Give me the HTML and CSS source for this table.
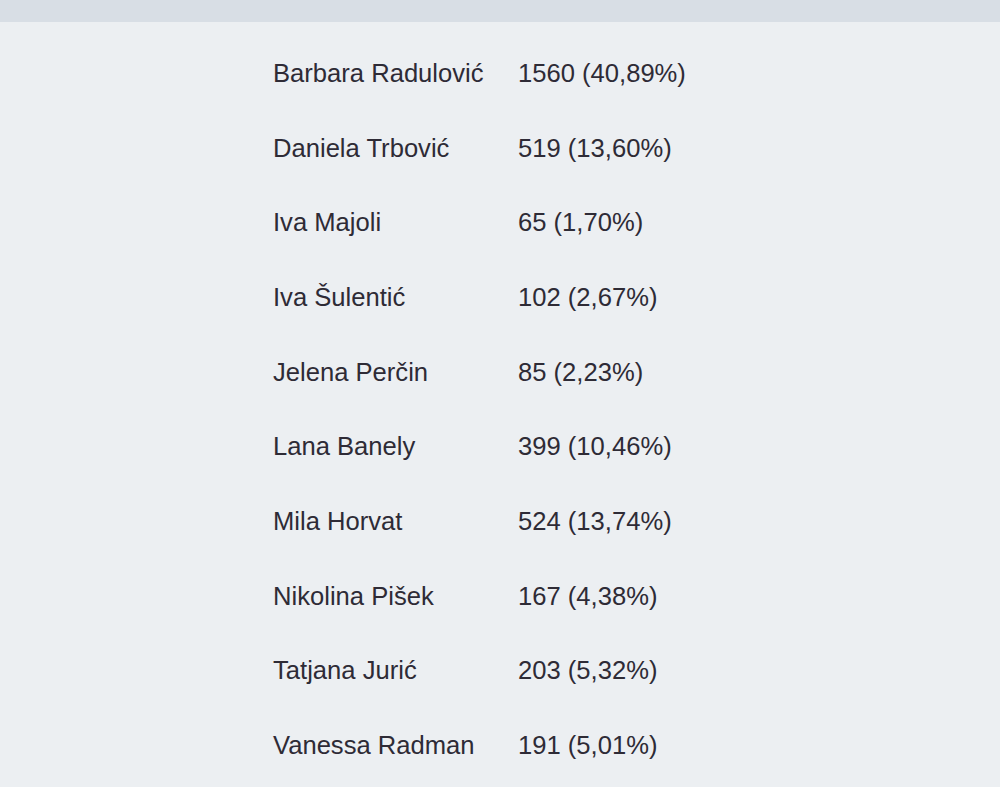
FILE: index.html
```html
<!DOCTYPE html>
<html lang="hr">
<head>
    <meta charset="UTF-8">
    <meta name="viewport" content="width=device-width, initial-scale=1.0">
    <title>Rezultati glasanja</title>
    <link rel="stylesheet" href="styles.css">
</head>
<body>
    <div id="top-bar"></div>
    <div id="results">
        <table class="votes">
            <tr><td class="name">Barbara Radulović</td><td class="count">1560 (40,89%)</td></tr>
            <tr><td class="name">Daniela Trbović</td><td class="count">519 (13,60%)</td></tr>
            <tr><td class="name">Iva Majoli</td><td class="count">65 (1,70%)</td></tr>
            <tr><td class="name">Iva Šulentić</td><td class="count">102 (2,67%)</td></tr>
            <tr><td class="name">Jelena Perčin</td><td class="count">85 (2,23%)</td></tr>
            <tr><td class="name">Lana Banely</td><td class="count">399 (10,46%)</td></tr>
            <tr><td class="name">Mila Horvat</td><td class="count">524 (13,74%)</td></tr>
            <tr><td class="name">Nikolina Pišek</td><td class="count">167 (4,38%)</td></tr>
            <tr><td class="name">Tatjana Jurić</td><td class="count">203 (5,32%)</td></tr>
            <tr><td class="name">Vanessa Radman</td><td class="count">191 (5,01%)</td></tr>
        </table>
    </div>
</body>
</html>
```

FILE: styles.css
```css
html, body {
    margin: 0;
    padding: 0;
}

body {
    font-family: "Liberation Sans", Arial, sans-serif;
    background-color: #eceff2;
    color: #2e2b36;
    height: 787px;
    overflow: hidden;
}

#top-bar {
    height: 22px;
    background-color: #d8dee5;
}

#results {
    padding: 14px 0 0 273px;
}

.votes {
    border-collapse: collapse;
    font-size: 25.6px;
}

.votes td {
    padding: 0;
    height: 74.67px;
    line-height: 74.67px;
    white-space: nowrap;
}

.votes td.name {
    width: 245px;
}
```
